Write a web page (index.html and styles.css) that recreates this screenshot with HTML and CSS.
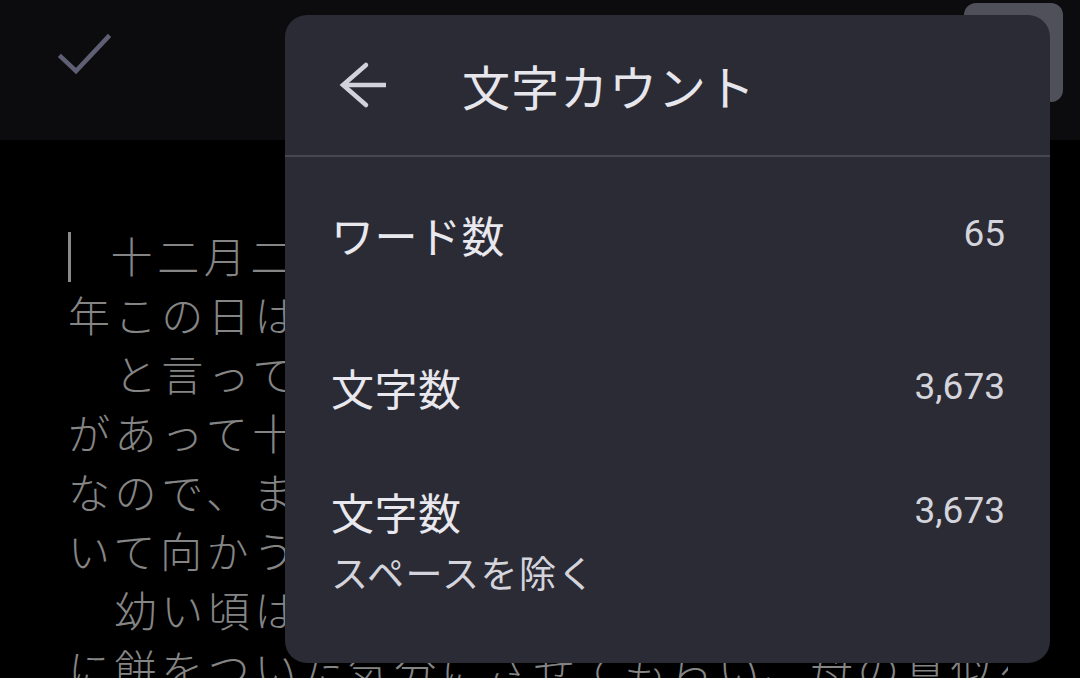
FILE: index.html
```html
<!DOCTYPE html>
<html lang="ja">
<head>
    <meta charset="UTF-8">
    <meta name="viewport" content="width=device-width, initial-scale=1.0">
    <title>文字カウント</title>
    <link rel="stylesheet" href="styles.css">
</head>
<body>
    <div class="screen">
        <header class="topbar">
            <svg class="check" width="56" height="48" viewBox="0 0 56 48">
                <polyline points="4,27 19,41 51,7" fill="none" stroke="#5e5e74" stroke-width="4.5" stroke-linecap="square"/>
            </svg>
            <div class="tab-thumb"></div>
        </header>

        <main class="editor">
            <div class="line"><span class="caret"></span>　十二月二十八日は餅つきの日だ。毎</div>
            <div class="line">年この日は家族みんなで集まって餅を</div>
            <div class="line">　と言っても、今は機械で餅をつくの</div>
            <div class="line">があって十時頃から始まるのが恒例だ。</div>
            <div class="line">なので、また朝早くから実家まで車を</div>
            <div class="line">いて向かうことになる。道は混んでいた。</div>
            <div class="line">　幼い頃は杵と臼を使って本当に父と</div>
            <div class="line">に餅をついた気分にさせてもらい、母の真似を</div>
        </main>

        <section class="dialog">
            <div class="dialog-head">
                <svg class="back" width="50" height="48" viewBox="0 0 50 48">
                    <polyline points="27,4 4,24 27,44" fill="none" stroke="#d2d2dc" stroke-width="4.5" stroke-linecap="round" stroke-linejoin="miter"/>
                    <line x1="5" y1="24" x2="47" y2="24" stroke="#d2d2dc" stroke-width="4.5"/>
                </svg>
                <h1 class="dialog-title">文字カウント</h1>
            </div>

            <div class="stat-list">
                <div class="stat stat--words">
                    <div class="stat-label">ワード数</div>
                    <div class="stat-value">65</div>
                </div>
                <div class="stat">
                    <div class="stat-label">文字数</div>
                    <div class="stat-value">3,673</div>
                </div>
                <div class="stat">
                    <div>
                        <div class="stat-label">文字数</div>
                        <div class="stat-sub">スペースを除く</div>
                    </div>
                    <div class="stat-value">3,673</div>
                </div>
            </div>
        </section>
    </div>
</body>
</html>
```

FILE: styles.css
```css
body {
    margin: 0;
    background: #000;
    font-family: "Noto Sans CJK JP", "Noto Sans", sans-serif;
    overflow: hidden;
}
.screen {
    position: relative;
    width: 1080px;
    height: 678px;
    overflow: hidden;
    background: #000;
}

/* top app bar */
.topbar {
    display: flex;
    align-items: flex-start;
    height: 140px;
    background: #0c0c0e;
}
.check {
    margin: 30px 0 0 57px;
}
.tab-thumb {
    width: 99px;
    height: 99px;
    margin: 3px 17px 0 auto;
    background: #50505a;
    border-radius: 12px;
}

/* document text */
.editor {
    padding: 85px 0 0 68px;
    width: 940px;
    color: #858585;
    font-size: 42px;
    letter-spacing: 4.6px;
    line-height: 59px;
    font-weight: 300;
}
.line {
    white-space: nowrap;
    overflow: hidden;
}
.caret {
    display: inline-block;
    width: 5px;
    height: 50px;
    margin: 0 -7px 0 -2px;
    vertical-align: -9px;
    background: #8a8a8a;
}

/* word count dialog */
.dialog {
    position: absolute;
    left: 285px;
    top: 15px;
    width: 765px;
    height: 648px;
    background: #2b2b35;
    border-radius: 22px;
}
.dialog-head {
    display: flex;
    align-items: center;
    height: 136px;
    padding: 2px 0 2px 54px;
    border-bottom: 2px solid #474753;
}
.dialog-title {
    margin: 0 0 0 73px;
    font-size: 48px;
    font-weight: 400;
    color: #e6e6ec;
    letter-spacing: 1px;
}
.stat-list {
    padding-top: 47px;
}
.stat {
    display: flex;
    justify-content: space-between;
    align-items: flex-start;
    padding: 0 45px 0 46px;
}
.stat + .stat {
    margin-top: 64px;
}
.stat--words {
    padding-bottom: 29px;
}
.stat-label {
    font-size: 43px;
    line-height: 60px;
    color: #e8e8ee;
    letter-spacing: 0.5px;
}
.stat-sub {
    margin-top: 9px;
    font-size: 37px;
    line-height: 44px;
    color: #d4d4dc;
    letter-spacing: 1.5px;
}
.stat-value {
    font-family: Roboto, "Noto Sans", sans-serif;
    font-size: 37px;
    line-height: 60px;
    color: #d4d4dc;
}
```
